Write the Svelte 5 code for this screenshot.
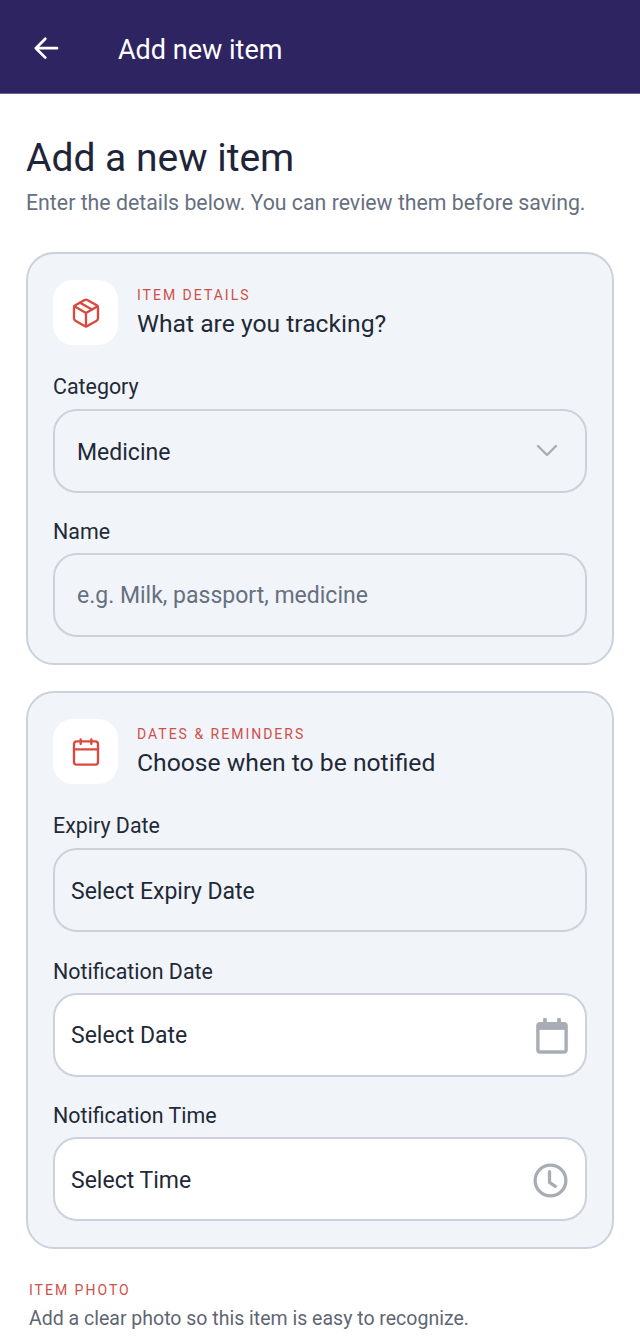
<script>
  let category = 'Medicine';
</script>

<svelte:head><title>Add new item</title></svelte:head>

<header class="topbar">
  <button class="back" aria-label="Back">
    <svg viewBox="0 0 28 28" width="28" height="28" fill="none" stroke="#fff" stroke-width="3" stroke-linecap="round" stroke-linejoin="round">
      <path d="M26 14H2.500M13 3.500 2.500 14 13 24.500" transform="translate(1.600 1.600) scale(.9)"/>
    </svg>
  </button>
  <span class="bar-title">Add new item</span>
</header>

<main class="page">
  <h1>Add a new item</h1>
  <p class="intro">Enter the details below. You can review them before saving.</p>

  <section class="card">
    <div class="card-head">
      <div class="tile">
        <svg viewBox="0 0 24 24" width="32" height="32" fill="none" stroke="#d9493d" stroke-width="1.750" stroke-linejoin="round" stroke-linecap="round">
          <path d="M11 21.730a2 2 0 0 0 2 0l7-4A2 2 0 0 0 21 16V8a2 2 0 0 0-1-1.730l-7-4a2 2 0 0 0-2 0l-7 4A2 2 0 0 0 3 8v8a2 2 0 0 0 1 1.730z"/>
          <path d="M12 22V12M3.290 7 12 12l8.710-5M7.500 4.270l9 5.150"/>
        </svg>
      </div>
      <div class="head-text">
        <div class="eyebrow">ITEM DETAILS</div>
        <div class="head-title">What are you tracking?</div>
      </div>
    </div>

    <div class="label">Category</div>
    <div class="field select">
      <span>{category}</span>
      <svg class="chev" viewBox="0 0 22 14" width="22" height="14" fill="none" stroke="#a9aeb6" stroke-width="2.400" stroke-linecap="round" stroke-linejoin="round">
        <path d="M2 3l9 9 9-9"/>
      </svg>
    </div>

    <div class="label second">Name</div>
    <div class="field select placeholder">e.g. Milk, passport, medicine</div>
  </section>

  <section class="card dates">
    <div class="card-head">
      <div class="tile">
        <svg viewBox="0 0 24 24" width="32" height="32" fill="none" stroke="#d9493d" stroke-width="1.750" stroke-linejoin="round" stroke-linecap="round">
          <rect x="3" y="4" width="18" height="17.500" rx="2"/>
          <path d="M3 10h18M8 2.500V6M16 2.500V6"/>
        </svg>
      </div>
      <div class="head-text">
        <div class="eyebrow">DATES &amp; REMINDERS</div>
        <div class="head-title">Choose when to be notified</div>
      </div>
    </div>

    <div class="label">Expiry Date</div>
    <div class="field date">Select Expiry Date</div>

    <div class="label second">Notification Date</div>
    <div class="field date white">
      <span>Select Date</span>
      <svg viewBox="0 0 34 38" width="32" height="36" fill="none">
        <rect x="2" y="6" width="30" height="30" rx="2.500" stroke="#a8adb5" stroke-width="3.600"/>
        <path d="M2 6h30v6.500H2z" fill="#a8adb5"/>
        <path d="M9.500 1.500v6M24.500 1.500v6" stroke="#a8adb5" stroke-width="4" stroke-linecap="round"/>
      </svg>
    </div>

    <div class="label second">Notification Time</div>
    <div class="field date white">
      <span>Select Time</span>
      <svg viewBox="0 0 36 36" width="35" height="35" fill="none" stroke="#a8adb5" stroke-width="3.400" stroke-linecap="round" stroke-linejoin="round">
        <circle cx="18" cy="18" r="15.800"/>
        <path d="M17 9v11l6 4"/>
      </svg>
    </div>
  </section>

  <div class="photo">
    <div class="eyebrow">ITEM PHOTO</div>
    <p class="photo-text">Add a clear photo so this item is easy to recognize.</p>
  </div>
</main>

<style>
  :global(body) { margin: 0; background: #fff; font-family: Roboto, "Noto Sans", sans-serif; color: #1f2937; }

  .topbar {
    height: 94px; background: #2e2461; border-bottom: 1px solid #6a6392;
    display: flex; align-items: center; box-sizing: border-box;
  }
  .back {
    background: none; border: 0; padding: 0; margin: 2px 0 0 32px; width: 28px; height: 28px;
    display: flex;
  }
  .bar-title { margin: 6px 0 0 58px; font-size: 27px; color: #fff; }

  .page { padding: 0 26px; height: 1250px; overflow: hidden; box-sizing: border-box; }
  h1 { margin: 40px 0 0; font-size: 39px; line-height: 48px; font-weight: 400; color: #1f2539; }
  .intro { margin: 6px 0 0; font-size: 21.300px; line-height: 30px; color: #667080; }

  .card {
    margin-top: 34px; background: #f1f5f9; border: 2px solid #ccd1dc; border-radius: 28px;
    padding: 26px 25px 26px; box-sizing: border-box;
  }
  .card.dates { margin-top: 26px; }
  .card-head { display: flex; align-items: center; gap: 19px; }
  .tile {
    width: 65px; height: 65px; background: #fff; border-radius: 20px;
    display: flex; align-items: center; justify-content: center;
  }
  .eyebrow { font-size: 14px; line-height: 18px; letter-spacing: 2px; color: #cf4f48; }
  .head-title { font-size: 24.700px; line-height: 32px; color: #1f2937; margin-top: 4px; }

  .label { margin-top: 27px; font-size: 21.400px; line-height: 30px; color: #1f2937; }
  .label.second { margin-top: 24px; }
  .dates .label.second { margin-top: 24.500px; }

  .field {
    margin-top: 7px; height: 84px; box-sizing: border-box; border: 2px solid #ccd1dc; border-radius: 24px;
    display: flex; align-items: center; justify-content: space-between;
    font-size: 23px; color: #1f2937; padding-top: 2px;
  }
  .second + .field { margin-top: 6px; }
  .select { padding-left: 22px; padding-right: 27px; }
  .chev { margin-top: -4px; }
  .placeholder { color: #667080; padding-top: 1px; }
  .date { padding-left: 16px; padding-right: 17px; }
  .white { background: #fff; }

  .photo { margin-top: 32px; padding-left: 3px; }
  .photo-text { margin: 6px 0 0; font-size: 19.500px; line-height: 28px; color: #5f6672; }
</style>
